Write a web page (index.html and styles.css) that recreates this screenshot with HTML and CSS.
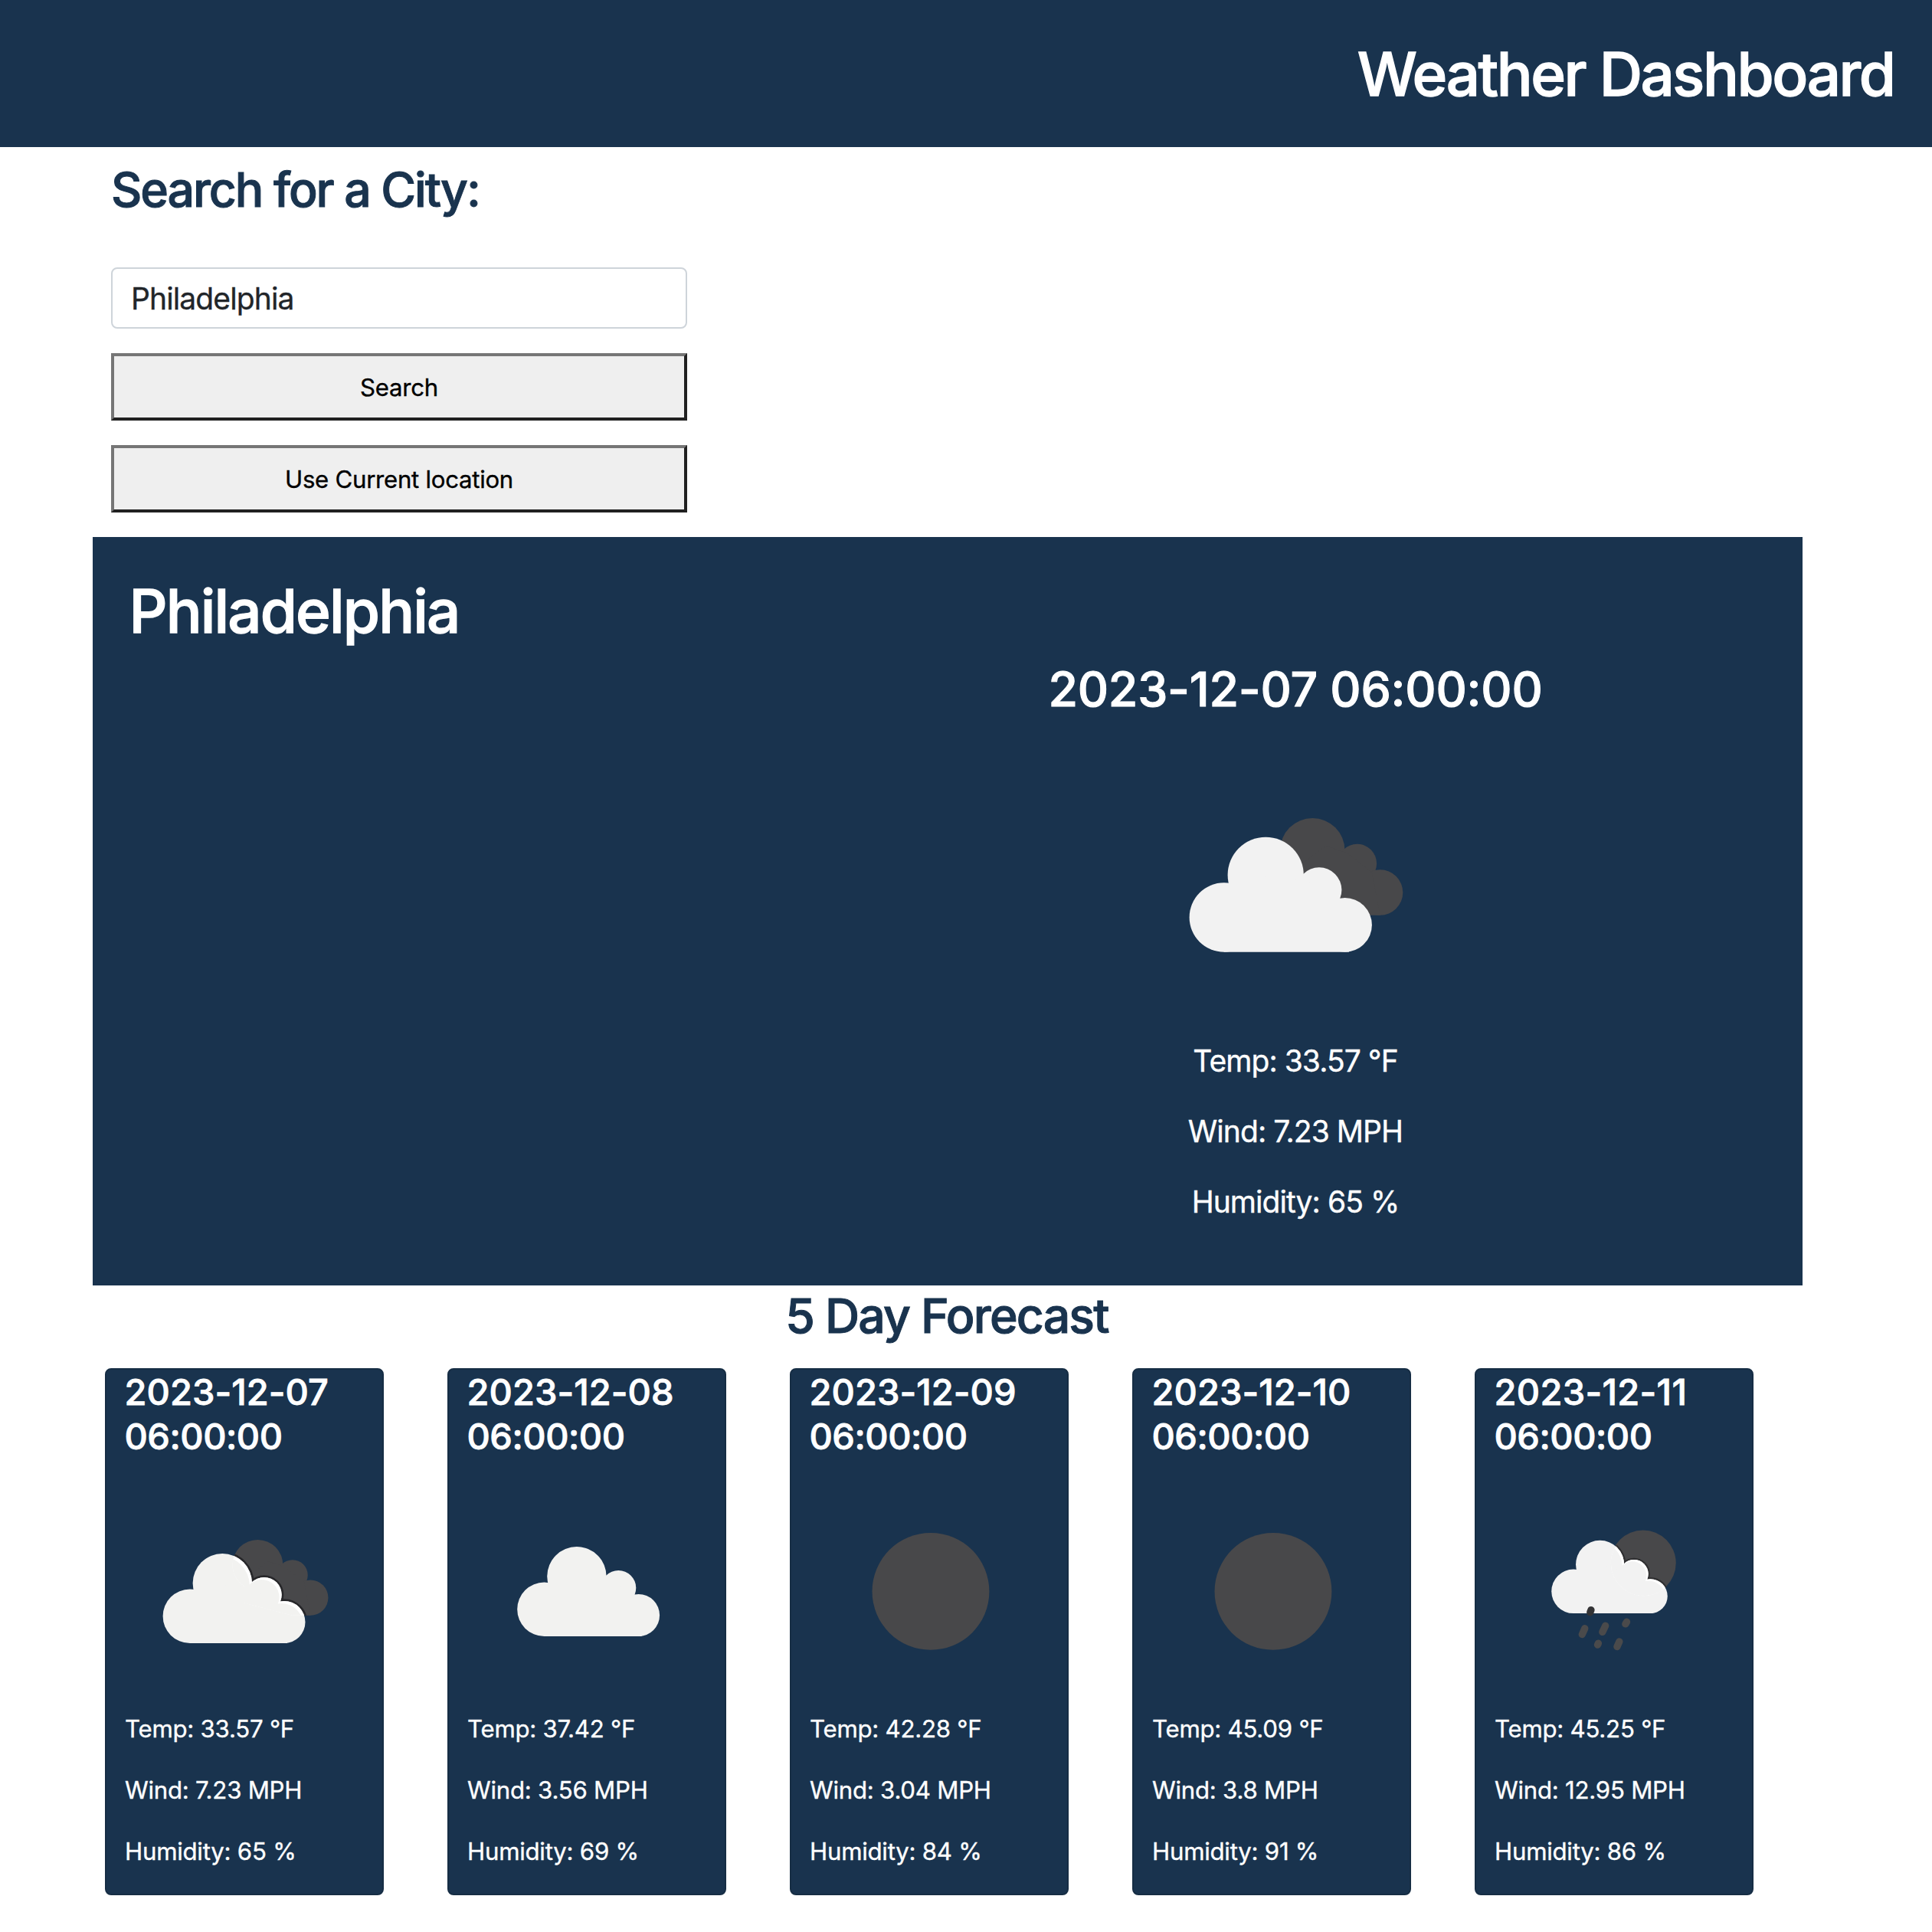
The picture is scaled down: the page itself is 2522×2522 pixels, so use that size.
FILE: index.html
```html
<!DOCTYPE html>
<html lang="en">
<head>
<meta charset="utf-8">
<title>Weather Dashboard</title>
<link rel="stylesheet" href="styles.css">
</head>
<body>
<svg class="sprite" aria-hidden="true">
  <defs>
    <g id="cloud">
      <circle cx="106.8" cy="243.5" r="45.2"/>
      <circle cx="161.2" cy="188.3" r="49.6"/>
      <circle cx="231" cy="207.7" r="29.4"/>
      <circle cx="264.6" cy="253.4" r="35.3"/>
      <path d="M106.8 288.7 L100 230 L150 190 L212 195 L255 215 L270 288.7 Z"/>
    </g>
    <g id="back-cloud">
      <circle cx="222.3" cy="156.2" r="42.2"/>
      <circle cx="280.6" cy="173.2" r="25.5"/>
      <circle cx="310.6" cy="211" r="29.7"/>
      <path d="M200 180 L240 150 L268 160 L300 185 L310.6 240.7 L280 240.7 L200 220 Z"/>
    </g>
    <clipPath id="back-clip">
      <circle cx="222.3" cy="156.2" r="42.2"/>
      <circle cx="280.6" cy="173.2" r="25.5"/>
      <circle cx="310.6" cy="211" r="29.7"/>
      <path d="M200 180 L240 150 L268 160 L300 185 L310.6 240.7 L280 240.7 L200 220 Z"/>
    </clipPath>
    <clipPath id="moon-clip"><circle cx="249.6" cy="153" r="55"/></clipPath>
  </defs>
</svg>

<header class="site-header">
  <h1 class="site-title">Weather Dashboard</h1>
</header>

<main class="page">
  <form class="search">
    <h2 class="search-title">Search for a City:</h2>
    <input class="search-input" type="text" value="Philadelphia">
    <button class="search-button" type="button">Search</button>
    <button class="search-button" type="button">Use Current location</button>
  </form>

  <section class="current">
    <h1 class="current-city">Philadelphia</h1>
    <div class="current-weather">
      <h2 class="current-date">2023-12-07 06:00:00</h2>
      <svg class="current-icon" viewBox="0 0 400 400">
        <use href="#back-cloud" fill="#48484a"/>
        <use href="#cloud" fill="#f2f2f2"/>
      </svg>
      <p class="current-stat">Temp: 33.57 °F</p>
      <p class="current-stat">Wind: 7.23 MPH</p>
      <p class="current-stat">Humidity: 65 %</p>
    </div>
  </section>

  <h2 class="forecast-title">5 Day Forecast</h2>
  <section class="forecast">
    <article class="card">
      <h4 class="card-date">2023-12-07 <span class="card-time">06:00:00</span></h4>
      <svg class="card-icon" viewBox="0 0 400 400">
        <use href="#back-cloud" fill="#48484a"/>
        <g clip-path="url(#back-clip)"><use href="#cloud" fill="#27272a" stroke="#27272a" stroke-width="7" transform="translate(2 -1.5)"/></g>
        <use href="#cloud" fill="#f2f2f0" transform="translate(2 -1.5)"/>
        <g clip-path="url(#back-clip)"><use href="#cloud" fill="#ffffff" transform="translate(2 -1.5)"/><use href="#cloud" fill="#f2f2f0" transform="translate(-2 2.5)"/></g>
      </svg>
      <p class="card-stat">Temp: 33.57 °F</p>
      <p class="card-stat">Wind: 7.23 MPH</p>
      <p class="card-stat">Humidity: 65 %</p>
    </article>
    <article class="card">
      <h4 class="card-date">2023-12-08 <span class="card-time">06:00:00</span></h4>
      <svg class="card-icon" viewBox="0 0 400 400">
        <use href="#cloud" fill="#f2f2f0" transform="translate(22 -13)"/>
      </svg>
      <p class="card-stat">Temp: 37.42 °F</p>
      <p class="card-stat">Wind: 3.56 MPH</p>
      <p class="card-stat">Humidity: 69 %</p>
    </article>
    <article class="card">
      <h4 class="card-date">2023-12-09 <span class="card-time">06:00:00</span></h4>
      <svg class="card-icon" viewBox="0 0 400 400">
        <circle cx="202.5" cy="200.5" r="98" fill="#48484a"/>
      </svg>
      <p class="card-stat">Temp: 42.28 °F</p>
      <p class="card-stat">Wind: 3.04 MPH</p>
      <p class="card-stat">Humidity: 84 %</p>
    </article>
    <article class="card">
      <h4 class="card-date">2023-12-10 <span class="card-time">06:00:00</span></h4>
      <svg class="card-icon" viewBox="0 0 400 400">
        <circle cx="202.5" cy="200.5" r="98" fill="#48484a"/>
      </svg>
      <p class="card-stat">Temp: 45.09 °F</p>
      <p class="card-stat">Wind: 3.8 MPH</p>
      <p class="card-stat">Humidity: 91 %</p>
    </article>
    <article class="card">
      <h4 class="card-date card-date-narrow">2023-12-11 <span class="card-time">06:00:00</span></h4>
      <svg class="card-icon" viewBox="0 0 400 400">
        <circle cx="248.5" cy="153" r="55" fill="#48484a"/>
        <g clip-path="url(#moon-clip)"><use href="#cloud" fill="#2f2f31" stroke="#2f2f31" stroke-width="7" transform="translate(45 2) scale(.815)"/></g>
        <use href="#cloud" fill="#f2f2f2" transform="translate(45 2) scale(.815)"/>
        <g clip-path="url(#moon-clip)"><use href="#cloud" fill="#ffffff" transform="translate(45 2) scale(.815)"/><use href="#cloud" fill="#f2f2f2" transform="translate(42 5) scale(.815)"/></g>
        <path d="M161.5 231.5 L160 235.5" stroke="#333335" stroke-width="12" stroke-linecap="round"/>
        <g stroke="#4a4a4b" stroke-width="12" stroke-linecap="round">
          <path d="M151 262.5 L146.5 272.5"/>
          <path d="M185.5 258 L180.5 268.5"/>
          <path d="M221.2 251.5 L219 255"/>
          <path d="M173.6 287.5 L172.4 289.8"/>
          <path d="M208.8 284.5 L205 293"/>
        </g>
      </svg>
      <p class="card-stat">Temp: 45.25 °F</p>
      <p class="card-stat">Wind: 12.95 MPH</p>
      <p class="card-stat">Humidity: 86 %</p>
    </article>
  </section>
</main>
</body>
</html>
```
FILE: styles.css
```css
* {
  box-sizing: border-box;
}

body,
h1,
h2,
h4,
p {
  margin: 0;
}

html {
  overflow: hidden;
}

body {
  background: #fff;
  color: #212529;
  font-family: Inter, "Liberation Sans", sans-serif;
  height: 2522px;
  -webkit-text-stroke: 0.35px currentColor;
}

h1,
h2,
h4 {
  font-weight: 500;
}

h1 {
  -webkit-text-stroke: 1.3px currentColor;
}

h2 {
  -webkit-text-stroke: 1px currentColor;
}

h4 {
  -webkit-text-stroke: 0.8px currentColor;
}

.sprite {
  display: block;
  width: 0;
  height: 0;
}

.site-header {
  height: 192px;
  padding: 49px 49.5px 0;
  background: #19334e;
  color: #fff;
  text-align: right;
}

.site-title,
.current-city {
  font-size: 78px;
  line-height: 96px;
  letter-spacing: -0.0313em;
}

.page {
  width: 2232px;
  margin-left: 121px;
}

.search {
  display: flex;
  flex-direction: column;
  width: 776px;
  height: 509px;
  padding: 16.5px 0 0 24px;
}

.search-title {
  height: 77px;
  margin-bottom: 63.5px;
  color: #19334e;
  font-size: 62.5px;
  line-height: 77px;
  letter-spacing: -0.0333em;
}

.search-input {
  height: 80px;
  margin: 0 0 32px;
  padding: 1px 24px 0;
  border: 2px solid #ced4da;
  border-radius: 8px;
  background: #fff;
  color: #212529;
  font: 400 39px Inter, sans-serif;
  letter-spacing: -0.0225em;
  -webkit-text-stroke: 0.35px currentColor;
}

.search-button {
  height: 88px;
  margin: 0 0 32px;
  padding: 1.5px 0 0;
  border: 4px solid;
  border-color: #767676 #212121 #212121 #767676;
  border-radius: 0;
  background: #efefef;
  color: #000;
  font: 400 31.2px Inter, sans-serif;
  letter-spacing: -0.009em;
  -webkit-text-stroke: 0.35px currentColor;
}

.current {
  height: 977px;
  padding: 49px 47.5px 0;
  background: #19334e;
  color: #fff;
}

.current-city {
  letter-spacing: -0.0239em;
}

.current-weather {
  display: flex;
  flex-direction: column;
  align-items: center;
  width: 908px;
  margin: 15px 0 0 1068.5px;
}

.current-date {
  margin-bottom: 16px;
  font-size: 62.5px;
  line-height: 77px;
  letter-spacing: -0.0035em;
}

.current-icon {
  display: block;
  width: 400px;
  height: 400px;
  margin-bottom: 1px;
}

.current-stat {
  margin-bottom: 32px;
  font-size: 39px;
  line-height: 60px;
  letter-spacing: -0.024em;
}

.forecast-title {
  margin: 1px 2px 30px 0;
  color: #19334e;
  font-size: 62.5px;
  line-height: 77px;
  letter-spacing: -0.029em;
  text-align: center;
}

.forecast {
  display: grid;
  grid-template-columns: repeat(5, 364px);
  gap: 83px;
  padding-left: 16px;
}

.card {
  height: 688px;
  padding: 0 24px;
  border: 2px solid #162d44;
  border-radius: 8px;
  background: #19334e;
  color: #fff;
}

.card-date {
  margin: 0 0 17.8px -0.5px;
  font-size: 47px;
  line-height: 57.6px;
  letter-spacing: 0.001em;
}

.card-date-narrow {
  letter-spacing: 0.0065em;
}

.card-time {
  display: block;
  letter-spacing: -0.01em;
}

.card-icon {
  display: block;
  width: 312px;
  height: 312px;
}

.card-stat {
  margin-bottom: 32px;
  font-size: 31.2px;
  line-height: 48px;
  letter-spacing: -0.0078em;
}
```
